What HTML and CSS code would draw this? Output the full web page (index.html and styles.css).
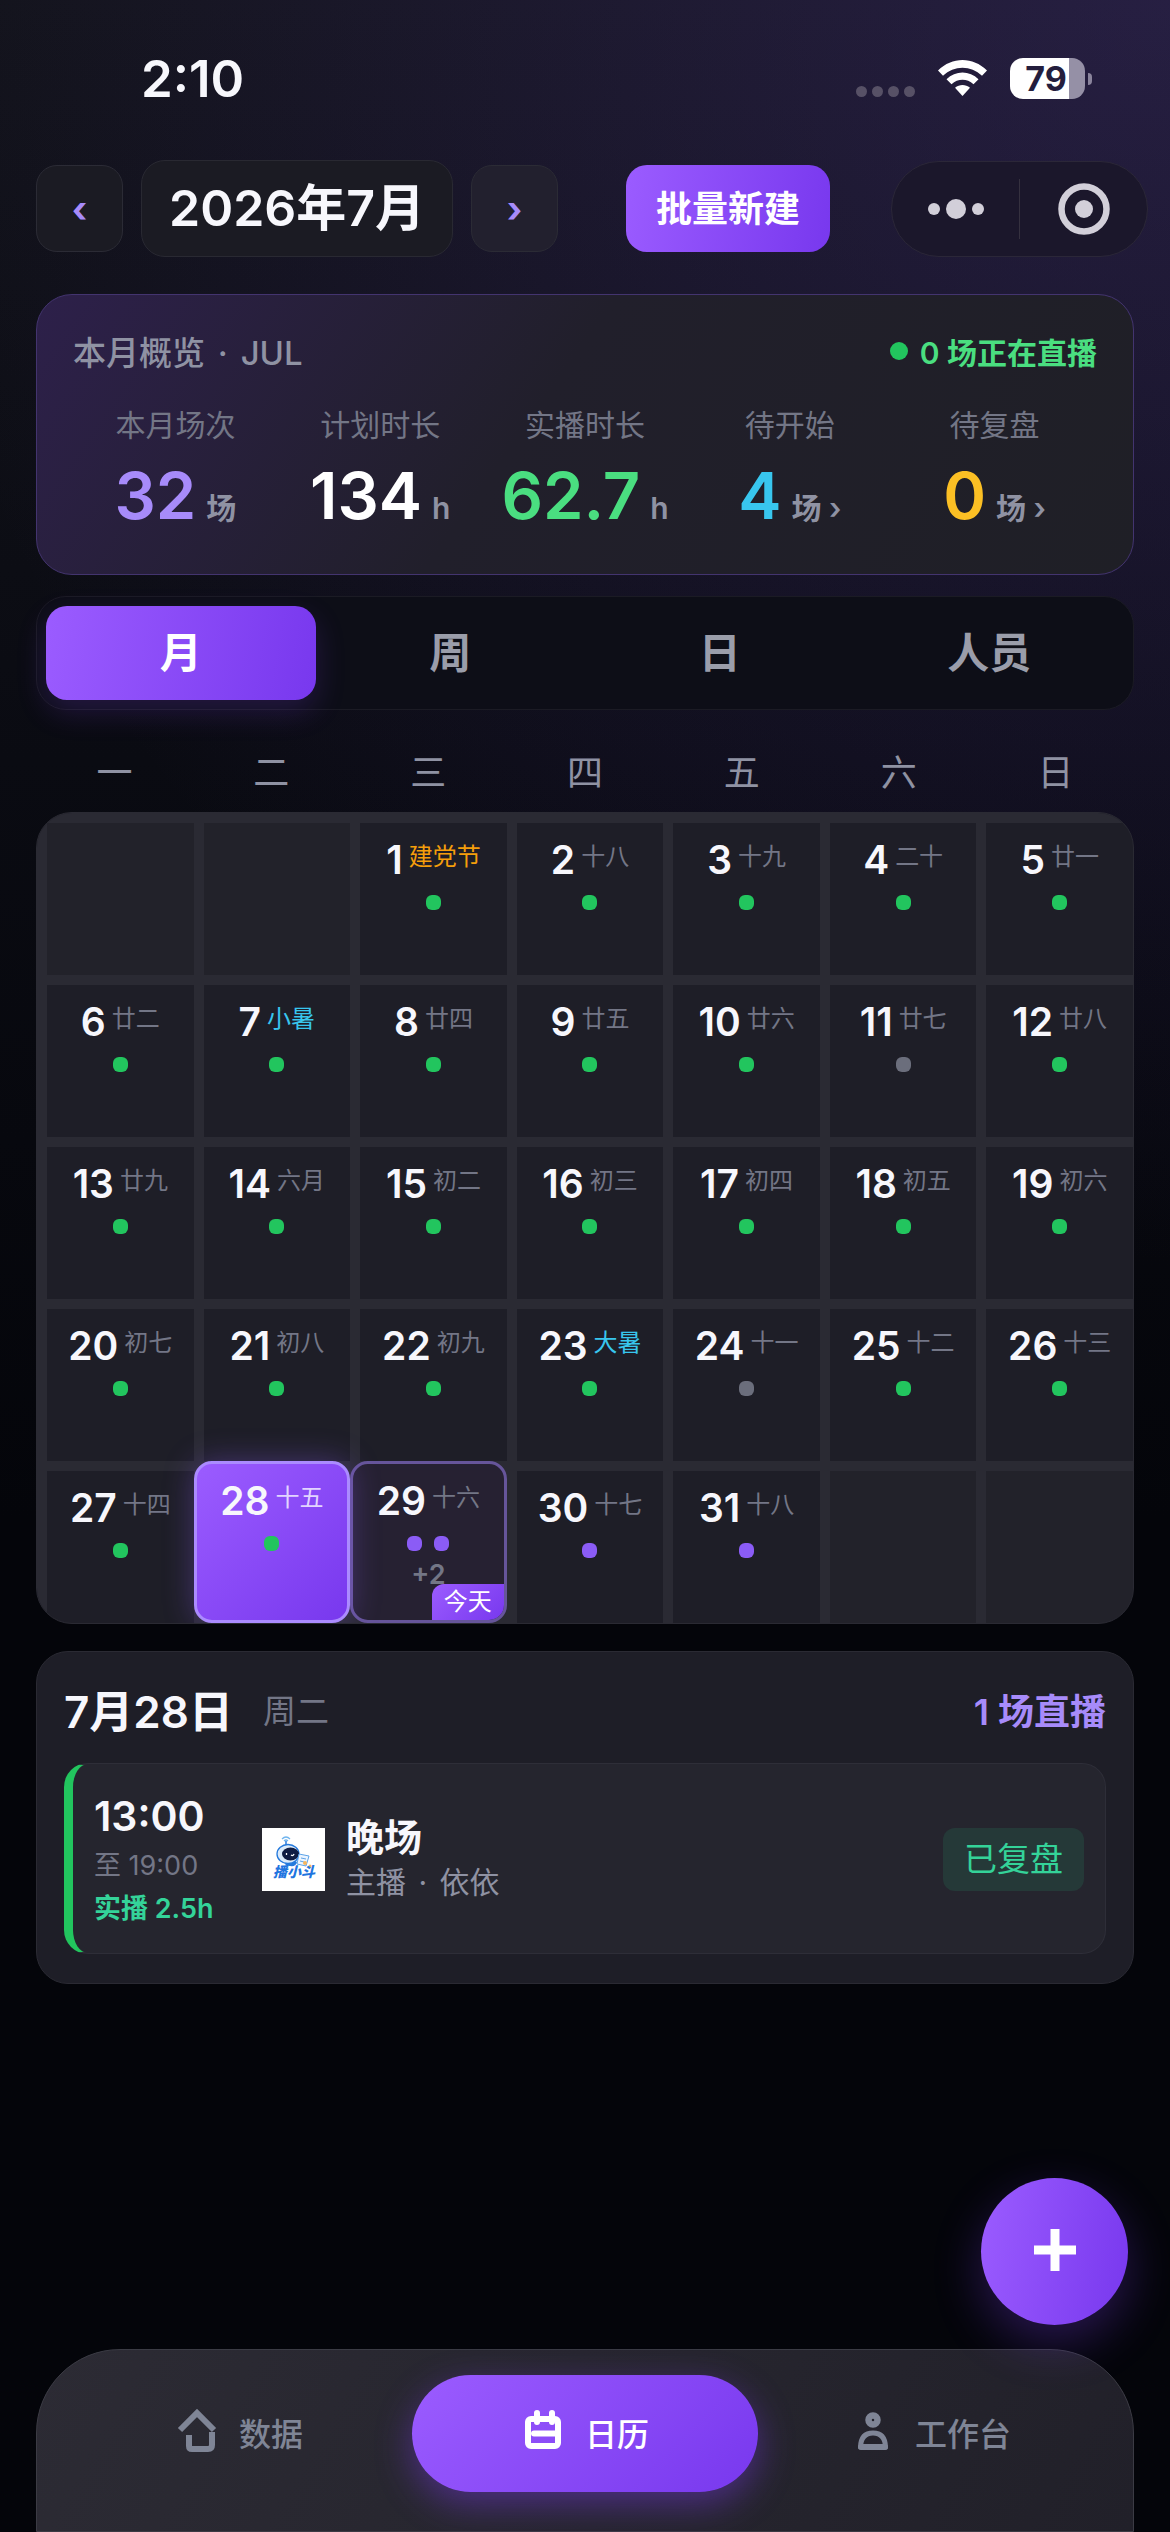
FILE: index.html
```html
<!DOCTYPE html>
<html lang="zh-CN">
<head>
  <meta charset="UTF-8" />
  <meta name="viewport" content="width=device-width, initial-scale=1.0"/>
  <title>直播日历</title>
  <link rel="stylesheet" href="styles.css">
</head>
<body>

  <div class="status-bar">
    <span class="clock">2:10</span>
    <div class="status-icons">
      <span class="signal"><i></i><i></i><i></i><i></i></span>
      <svg class="wifi" viewBox="0 0 51 38" fill="#fff">
        <path d="M1 11.500C15-2.500 36-2.500 50 11.500L45 16.800C34 6 17 6 6 16.800Z"/>
        <path d="M9.500 20.200C18.500 11.400 32.500 11.400 41.500 20.200L36.500 25.200C30 19.300 21 19.300 14.500 25.200Z"/>
        <path d="M18 28.800C22.500 25 28.500 25 33 28.800L25.500 37Z"/>
      </svg>
      <span class="battery">79</span>
    </div>
  </div>

  <header class="topbar">
    <button type="button" class="month-arrow" aria-label="上个月">‹</button>
    <h1 class="month-title">2026年7月</h1>
    <button type="button" class="month-arrow next" aria-label="下个月">›</button>
    <button type="button" class="batch-btn">批量新建</button>
    <div class="capsule">
      <button type="button" aria-label="更多">
        <svg width="56" height="20" viewBox="0 0 56 20" fill="#d2cfd9"><circle cx="6" cy="10" r="6"/><circle cx="28" cy="10" r="10"/><circle cx="50" cy="10" r="6"/></svg>
      </button>
      <button type="button" aria-label="关闭">
        <svg width="52" height="52" viewBox="0 0 52 52"><circle cx="26" cy="26" r="22.500" fill="none" stroke="#d2cfd9" stroke-width="6.500"/><circle cx="26" cy="26" r="9" fill="#d2cfd9"/></svg>
      </button>
    </div>
  </header>

  <main>
    <section class="overview">
      <div class="overview-head">
        <h2>本月概览 <span class="sep">·</span> JUL</h2>
        <span class="live">0 场正在直播</span>
      </div>
      <div class="stats">
        <div class="stat">
          <span class="stat-label">本月场次</span>
          <span class="stat-value purple">32 <small>场</small></span>
        </div>
        <div class="stat">
          <span class="stat-label">计划时长</span>
          <span class="stat-value">134 <small>h</small></span>
        </div>
        <div class="stat">
          <span class="stat-label">实播时长</span>
          <span class="stat-value green">62.7 <small>h</small></span>
        </div>
        <div class="stat">
          <span class="stat-label">待开始</span>
          <span class="stat-value blue">4 <small>场 ›</small></span>
        </div>
        <div class="stat">
          <span class="stat-label">待复盘</span>
          <span class="stat-value yellow">0 <small>场 ›</small></span>
        </div>
      </div>
    </section>

    <div class="tabs">
      <button type="button" class="active">月</button>
      <button type="button">周</button>
      <button type="button">日</button>
      <button type="button">人员</button>
    </div>

    <div class="weekdays">
      <span>一</span><span>二</span><span>三</span><span>四</span><span>五</span><span>六</span><span>日</span>
    </div>

    <div class="calendar">
      <div class="day empty"></div>
      <div class="day empty"></div>
      <button type="button" class="day"><span class="date"><b>1</b><em class="festival">建党节</em></span><span class="dots"><i></i></span></button>
      <button type="button" class="day"><span class="date"><b>2</b><em>十八</em></span><span class="dots"><i></i></span></button>
      <button type="button" class="day"><span class="date"><b>3</b><em>十九</em></span><span class="dots"><i></i></span></button>
      <button type="button" class="day"><span class="date"><b>4</b><em>二十</em></span><span class="dots"><i></i></span></button>
      <button type="button" class="day"><span class="date"><b>5</b><em>廿一</em></span><span class="dots"><i></i></span></button>

      <button type="button" class="day"><span class="date"><b>6</b><em>廿二</em></span><span class="dots"><i></i></span></button>
      <button type="button" class="day"><span class="date"><b>7</b><em class="term">小暑</em></span><span class="dots"><i></i></span></button>
      <button type="button" class="day"><span class="date"><b>8</b><em>廿四</em></span><span class="dots"><i></i></span></button>
      <button type="button" class="day"><span class="date"><b>9</b><em>廿五</em></span><span class="dots"><i></i></span></button>
      <button type="button" class="day"><span class="date"><b>10</b><em>廿六</em></span><span class="dots"><i></i></span></button>
      <button type="button" class="day"><span class="date"><b>11</b><em>廿七</em></span><span class="dots"><i class="off"></i></span></button>
      <button type="button" class="day"><span class="date"><b>12</b><em>廿八</em></span><span class="dots"><i></i></span></button>

      <button type="button" class="day"><span class="date"><b>13</b><em>廿九</em></span><span class="dots"><i></i></span></button>
      <button type="button" class="day"><span class="date"><b>14</b><em>六月</em></span><span class="dots"><i></i></span></button>
      <button type="button" class="day"><span class="date"><b>15</b><em>初二</em></span><span class="dots"><i></i></span></button>
      <button type="button" class="day"><span class="date"><b>16</b><em>初三</em></span><span class="dots"><i></i></span></button>
      <button type="button" class="day"><span class="date"><b>17</b><em>初四</em></span><span class="dots"><i></i></span></button>
      <button type="button" class="day"><span class="date"><b>18</b><em>初五</em></span><span class="dots"><i></i></span></button>
      <button type="button" class="day"><span class="date"><b>19</b><em>初六</em></span><span class="dots"><i></i></span></button>

      <button type="button" class="day"><span class="date"><b>20</b><em>初七</em></span><span class="dots"><i></i></span></button>
      <button type="button" class="day"><span class="date"><b>21</b><em>初八</em></span><span class="dots"><i></i></span></button>
      <button type="button" class="day"><span class="date"><b>22</b><em>初九</em></span><span class="dots"><i></i></span></button>
      <button type="button" class="day"><span class="date"><b>23</b><em class="term">大暑</em></span><span class="dots"><i></i></span></button>
      <button type="button" class="day"><span class="date"><b>24</b><em>十一</em></span><span class="dots"><i class="off"></i></span></button>
      <button type="button" class="day"><span class="date"><b>25</b><em>十二</em></span><span class="dots"><i></i></span></button>
      <button type="button" class="day"><span class="date"><b>26</b><em>十三</em></span><span class="dots"><i></i></span></button>

      <button type="button" class="day"><span class="date"><b>27</b><em>十四</em></span><span class="dots"><i></i></span></button>
      <button type="button" class="day selected"><span class="date"><b>28</b><em>十五</em></span><span class="dots"><i></i></span></button>
      <button type="button" class="day today"><span class="date"><b>29</b><em>十六</em></span><span class="dots"><i class="plan"></i><i class="plan"></i></span><span class="more">+2</span><span class="today-tag">今天</span></button>
      <button type="button" class="day"><span class="date"><b>30</b><em>十七</em></span><span class="dots"><i class="plan"></i></span></button>
      <button type="button" class="day"><span class="date"><b>31</b><em>十八</em></span><span class="dots"><i class="plan"></i></span></button>
      <div class="day empty"></div>
      <div class="day empty"></div>
    </div>

    <section class="detail">
      <div class="detail-head">
        <h2>7月28日</h2>
        <span class="weekday">周二</span>
        <span class="count">1 场直播</span>
      </div>
      <article class="session">
        <div class="session-time">
          <span class="start">13:00</span>
          <span class="end">至 19:00</span>
          <span class="actual">实播 2.5h</span>
        </div>
        <svg class="session-logo" viewBox="0 0 63 63">
          <rect width="63" height="63" fill="#fff"/>
          <path d="M20 11q4-4 8 0M22 13q2-2 4 0" fill="none" stroke="#6fb4ee" stroke-width="1.200"/>
          <path d="M24 13v5" stroke="#2479dc" stroke-width="1.500"/>
          <path d="M22 34q6-5 13 0q-1 5-7 4q-5 0-6-4Z" fill="#2479dc"/>
          <ellipse cx="26" cy="26" rx="11" ry="9.500" fill="#dcebfa" stroke="#2479dc" stroke-width="1.300"/>
          <ellipse cx="28.500" cy="26" rx="8.500" ry="6.500" fill="#101d43"/>
          <path d="M24.500 25v2M29 27q2 1.500 3-1" fill="none" stroke="#fff" stroke-width="1.300"/>
          <path d="M37 26l10 2-3 10-9-2Z" fill="#eaf4ff" stroke="#5da3e8"/>
          <path d="M39 30l5 1M38 33l4 1" stroke="#5da3e8"/>
          <circle cx="43" cy="35" r="2" fill="#f6b55d"/><circle cx="48" cy="38" r="1.500" fill="#f6b55d"/>
          <text x="11" y="49" class="logo-text">播小斗</text>
        </svg>
        <div class="session-info">
          <h3>晚场</h3>
          <p>主播 <span class="sep">·</span> 依依</p>
        </div>
        <span class="session-status">已复盘</span>
      </article>
    </section>
  </main>

  <button type="button" class="fab" aria-label="新建">
    <svg width="42" height="42" viewBox="0 0 42 42" stroke="#fff" stroke-width="9"><path d="M21 0v42M0 21h42"/></svg>
  </button>

  <nav class="tabbar">
    <a href="#">
      <svg viewBox="0 0 42 46" fill="none" stroke="currentColor" stroke-width="6">
        <path d="M5 21L22 4l17 17"/>
        <path d="M14 26v11q0 3 3 3h16q4 0 4-4V23" stroke-linejoin="round"/>
      </svg>
      数据
    </a>
    <a href="#" class="active">
      <svg viewBox="0 0 42 46" fill="none" stroke="currentColor" stroke-width="6" stroke-linecap="round">
        <rect x="7" y="10" width="30" height="27" rx="3"/>
        <path d="M16 4v9M31 4v9M13 24.500h22"/>
      </svg>
      日历
    </a>
    <a href="#">
      <svg viewBox="0 0 42 46">
        <circle cx="22" cy="11" r="4.500" fill="none" stroke="currentColor" stroke-width="6.500"/>
        <path d="M9.500 38Q10 24 22 24T34.500 38Z" fill="none" stroke="currentColor" stroke-width="5" stroke-linejoin="round"/>
        <path d="M10 38h24" stroke="currentColor" stroke-width="6" stroke-linecap="round"/>
      </svg>
      工作台
    </a>
  </nav>

</body>
</html>
```

FILE: styles.css
```css
:root {
  --bg: #04050a;
  --text: #f7f7fc;
  --muted: #8f92a3;
  --dim: #737686;
  --primary: linear-gradient(135deg, #9b5cff, #7838ee);
  --primary-wide: linear-gradient(100deg, #9b5cff, #7838ee);
  --violet: #a78bfa;
  --green: #22c55e;
  --line: #2a2a33;
  --cell: #1e1e27;
}

* {
  box-sizing: border-box;
}

body {
  margin: 0;
  min-height: 100vh;
  display: flex;
  flex-direction: column;
  font-family: Inter, "Noto Sans CJK SC", sans-serif;
  color: var(--text);
  background:
    radial-gradient(ellipse 110% 50% at 100% 0, rgba(92, 62, 170, 0.28), transparent),
    linear-gradient(180deg, #12131a 0, #0a0b12 30%, #04050a 60%);
  background-color: var(--bg);
}

button {
  font-family: inherit;
  color: inherit;
  padding: 0;
  border: none;
  background: none;
  cursor: pointer;
}

h1, h2, h3, p {
  margin: 0;
}

.sep {
  margin: 0 4px;
}

/* Status bar */
.status-bar {
  display: flex;
  justify-content: space-between;
  align-items: center;
  height: 160px;
  padding: 0 78px 4px 141px;
}

.clock {
  font-size: 51px;
  font-weight: 600;
}

.status-icons {
  display: flex;
  align-items: center;
}

.signal {
  display: flex;
  gap: 5px;
  margin: 27px 22px 0 0;
}

.signal i {
  width: 11px;
  height: 11px;
  border-radius: 50%;
  background: #575166;
}

.wifi {
  width: 51px;
  height: 38px;
  margin-right: 22px;
}

.battery {
  position: relative;
  width: 75px;
  height: 41px;
  margin-right: 7px;
  padding-right: 3px;
  border-radius: 13px;
  background: linear-gradient(90deg, #fff 79%, #9590a6 79%);
  color: #241e3d;
  font-size: 34px;
  font-weight: 700;
  line-height: 41px;
  text-align: center;
}

.battery::after {
  content: "";
  position: absolute;
  top: 15px;
  right: -7px;
  width: 4px;
  height: 12px;
  border-radius: 0 4px 4px 0;
  background: #8a849c;
}

/* Header */
.topbar {
  display: flex;
  align-items: center;
  padding: 0 22px 0 36px;
}

.month-arrow {
  width: 87px;
  height: 87px;
  border: 1px solid #2b2b35;
  border-radius: 21px;
  background: #1b1b23;
  color: var(--violet);
  font-size: 36px;
  font-weight: 700;
}

.month-arrow.next {
  background: #22202e;
}

.month-title {
  height: 97px;
  margin: 0 18px;
  padding: 0 27px;
  border: 1px solid #292932;
  border-radius: 24px;
  background: #1b1b23;
  font-size: 50px;
  font-weight: 600;
  line-height: 95px;
}

.batch-btn {
  height: 87px;
  margin-left: 68px;
  padding: 0 30px 6px;
  border-radius: 21px;
  background: var(--primary-wide);
  color: #fff;
  font-size: 36px;
  font-weight: 600;
}

.capsule {
  display: flex;
  align-items: center;
  width: 257px;
  height: 96px;
  margin-left: auto;
  border: 1px solid #2b2738;
  border-radius: 48px;
  background: #1b172b;
}

.capsule button {
  display: flex;
  flex: 1;
  height: 60px;
  align-items: center;
  justify-content: center;
}

.capsule button + button {
  border-left: 1px solid #35313f;
}

main {
  padding: 37px 36px 0;
}

/* Month overview */
.overview {
  padding: 34px 36px 41px;
  border: 1px solid #43346f;
  border-radius: 36px;
  background: linear-gradient(125deg, #2d204a 0, #211f2b 45%, #1f1f26 100%);
}

.overview-head {
  display: flex;
  justify-content: space-between;
  align-items: center;
  height: 44px;
}

.overview-head h2 {
  color: var(--muted);
  font-size: 33px;
  font-weight: 500;
}

.live {
  display: flex;
  align-items: center;
  gap: 12px;
  color: #4ade80;
  font-size: 30px;
  font-weight: 600;
}

.live::before {
  content: "";
  width: 18px;
  height: 18px;
  border-radius: 50%;
  background: var(--green);
}

.stats {
  display: grid;
  grid-template-columns: repeat(5, 1fr);
  margin-top: 32px;
}

.stat {
  text-align: center;
  white-space: nowrap;
}

.stat-label {
  display: block;
  color: var(--dim);
  font-size: 30px;
  line-height: 40px;
}

.stat-value {
  display: flex;
  justify-content: center;
  align-items: baseline;
  gap: 10px;
  height: 76px;
  margin-top: 12px;
  color: #fff;
  font-size: 65px;
  font-weight: 600;
  line-height: 78px;
}

.stat-value small {
  color: var(--muted);
  font-size: 30px;
  font-weight: 600;
}

.stat-value.purple { color: var(--violet); }
.stat-value.green { color: #4ade80; }
.stat-value.blue { color: #38c6ee; }
.stat-value.yellow { color: #fbbf24; }

/* View tabs */
.tabs {
  display: grid;
  grid-template-columns: repeat(4, 1fr);
  margin-top: 21px;
  padding: 9px;
  border: 1px solid #1b1b24;
  border-radius: 30px;
  background: #0d0e17;
}

.tabs button {
  height: 94px;
  padding-bottom: 8px;
  border-radius: 21px;
  color: #9a9daa;
  font-size: 42px;
  font-weight: 600;
}

.tabs .active {
  background: var(--primary-wide);
  box-shadow: 0 12px 30px rgba(124, 58, 237, 0.2);
  color: #fff;
}

/* Calendar */
.weekdays {
  display: grid;
  grid-template-columns: repeat(7, 1fr);
  margin-top: 39px;
  padding-bottom: 15px;
  color: var(--muted);
  font-size: 36px;
  line-height: 48px;
  text-align: center;
}

.calendar {
  display: grid;
  grid-template-columns: repeat(7, 1fr);
  grid-auto-rows: 162px;
  overflow: hidden;
  border: 1px solid var(--line);
  border-radius: 36px;
  background: var(--line);
}

.day {
  position: relative;
  display: flex;
  flex-direction: column;
  align-items: center;
  padding-top: 14px;
  border: 0 solid var(--line);
  border-width: 10px 0 0 10px;
  background: var(--cell);
}

.day.empty {
  background: #22222a;
}

.date {
  display: flex;
  align-items: flex-start;
  gap: 6px;
  height: 46px;
}

.date b {
  font-size: 39px;
  font-weight: 600;
  line-height: 46px;
}

.date em {
  color: var(--dim);
  font-size: 24px;
  font-style: normal;
  line-height: 39px;
}

.date .festival { color: #f59e0b; }
.date .term { color: #38c6ee; }

.dots {
  display: flex;
  gap: 12px;
  margin-top: 12px;
}

.dots i {
  width: 15px;
  height: 15px;
  border-radius: 6px;
  background: var(--green);
}

.dots .off { background: #6b6e7c; }
.dots .plan { background: #8b5cf6; }

.day.selected {
  z-index: 1;
  border: 3px solid #ab8bff;
  border-radius: 18px;
  background: var(--primary);
  box-shadow: 0 0 30px rgba(139, 92, 246, 0.35);
}

.selected em {
  color: #e2d4ff;
}

.day.today {
  border: 3px solid #66559a;
  border-radius: 18px;
  background: #262132;
}

.more {
  margin-top: 9px;
  color: var(--dim);
  font-size: 27px;
  font-weight: 600;
  line-height: 30px;
}

.today-tag {
  position: absolute;
  right: 0;
  bottom: 0;
  padding: 0 12px;
  border-radius: 12px 0 15px 0;
  background: var(--primary);
  color: #fff;
  font-size: 24px;
  line-height: 36px;
}

/* Day detail */
.detail {
  margin-top: 27px;
  padding: 24px 27px 29px;
  border: 1px solid #2a2a33;
  border-radius: 32px;
  background: #1e1e27;
}

.detail-head {
  display: flex;
  align-items: center;
  height: 66px;
  margin-bottom: 21px;
}

.detail-head h2 {
  font-size: 44px;
  font-weight: 600;
}

.weekday {
  margin-left: 30px;
  color: var(--dim);
  font-size: 33px;
}

.count {
  margin-left: auto;
  color: var(--violet);
  font-size: 36px;
  font-weight: 600;
}

.session {
  display: flex;
  align-items: center;
  height: 191px;
  padding: 2px 21px 0;
  border: 1px solid #2e2e38;
  border-left: 9px solid var(--green);
  border-radius: 24px;
  background: #25252e;
}

.session-time {
  display: flex;
  flex-direction: column;
  width: 168px;
}

.start {
  font-size: 41px;
  font-weight: 600;
  line-height: 54px;
}

.end {
  color: var(--dim);
  font-size: 27px;
  line-height: 45px;
}

.actual {
  color: #34d399;
  font-size: 27px;
  font-weight: 600;
  line-height: 42px;
}

.session-logo {
  width: 63px;
  height: 63px;
}

.logo-text {
  fill: #1f75e0;
  font-size: 14px;
  font-weight: 900;
  font-style: italic;
}

.session-info {
  flex: 1;
  margin-left: 21px;
}

.session-info h3 {
  font-size: 38px;
  font-weight: 600;
  line-height: 45px;
}

.session-info p {
  color: var(--muted);
  font-size: 30px;
  line-height: 45px;
}

.session-status {
  padding: 0 21px;
  border-radius: 12px;
  background: #253938;
  color: #34d399;
  font-size: 33px;
  line-height: 63px;
}

/* Floating button */
.fab {
  position: fixed;
  right: 42px;
  bottom: 207px;
  display: flex;
  align-items: center;
  justify-content: center;
  width: 147px;
  height: 147px;
  padding-bottom: 3px;
  border-radius: 50%;
  background: var(--primary-wide);
  box-shadow: 0 18px 48px rgba(124, 58, 237, 0.3);
}

/* Bottom tab bar */
.tabbar {
  display: grid;
  grid-template-columns: repeat(3, 1fr);
  height: 183px;
  margin: auto 36px 0;
  padding: 25px 29px 0;
  border: 1px solid #3b3b44;
  border-radius: 84px 84px 0 0;
  background: linear-gradient(120deg, #2c2b34, #212029);
}

.tabbar a {
  display: flex;
  align-items: center;
  justify-content: center;
  gap: 22px;
  height: 117px;
  padding-bottom: 4px;
  border-radius: 59px;
  color: #7f8596;
  font-size: 32px;
  font-weight: 500;
  text-decoration: none;
}

.tabbar svg {
  width: 42px;
  height: 46px;
}

.tabbar .active {
  background: var(--primary);
  box-shadow: 0 12px 36px rgba(124, 58, 237, 0.45);
  color: #fff;
}
```
